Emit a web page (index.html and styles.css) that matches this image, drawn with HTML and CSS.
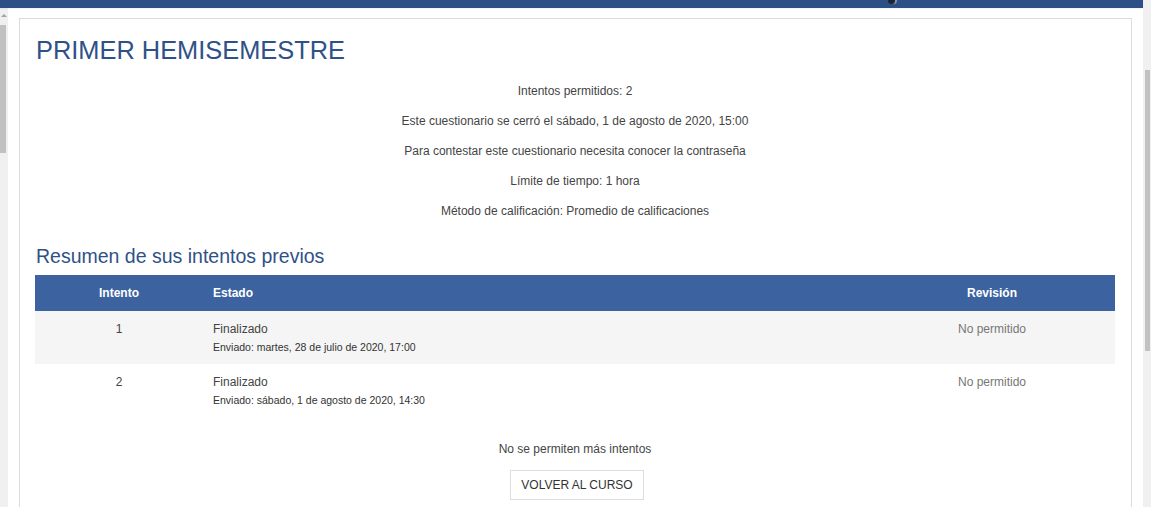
FILE: index.html
```html
<!DOCTYPE html>
<html lang="es">
<head>
<meta charset="utf-8">
<title>PRIMER HEMISEMESTRE</title>
<link rel="stylesheet" href="styles.css">
</head>
<body>
<div class="main">
  <div class="topbar"><span class="avatar"></span></div>
  <div class="row">
    <div class="left-rail">
      <span class="rail-arrow"></span>
      <span class="left-thumb"></span>
    </div>
    <div class="content">
      <div class="card">
        <h1 class="title">PRIMER HEMISEMESTRE</h1>
        <div class="info">
          <p>Intentos permitidos: 2</p>
          <p>Este cuestionario se cerró el sábado, 1 de agosto de 2020, 15:00</p>
          <p>Para contestar este cuestionario necesita conocer la contraseña</p>
          <p>Límite de tiempo: 1 hora</p>
          <p>Método de calificación: Promedio de calificaciones</p>
        </div>
        <h2 class="subtitle">Resumen de sus intentos previos</h2>
        <table class="attempts">
          <thead>
            <tr>
              <th class="c-num">Intento</th>
              <th class="c-state">Estado</th>
              <th class="c-rev">Revisión</th>
            </tr>
          </thead>
          <tbody>
            <tr class="odd">
              <td class="c-num">1</td>
              <td class="c-state">
                <div class="state">Finalizado</div>
                <div class="sent">Enviado: martes, 28 de julio de 2020, 17:00</div>
              </td>
              <td class="c-rev">No permitido</td>
            </tr>
            <tr>
              <td class="c-num">2</td>
              <td class="c-state">
                <div class="state">Finalizado</div>
                <div class="sent">Enviado: sábado, 1 de agosto de 2020, 14:30</div>
              </td>
              <td class="c-rev">No permitido</td>
            </tr>
          </tbody>
        </table>
        <p class="no-more">No se permiten más intentos</p>
        <div class="actions"><button class="btn">VOLVER AL CURSO</button></div>
      </div>
    </div>
  </div>
</div>
<div class="right-rail"><span class="right-thumb"></span></div>
</body>
</html>
```

FILE: styles.css
```css
html, body {
  margin: 0;
  padding: 0;
  height: 507px;
  overflow: hidden;
  background: #fff;
  font-family: "Liberation Sans", Arial, sans-serif;
  color: #444;
}
body {
  display: flex;
}
.main {
  flex: 1;
  display: flex;
  flex-direction: column;
  min-width: 0;
}
.topbar {
  flex: 0 0 8px;
  height: 8px;
  background: #2c4f86;
  position: relative;
  box-shadow: 0 1px 2px rgba(0,0,0,0.06);
  z-index: 1;
}
.avatar {
  position: absolute;
  left: 888px;
  top: -3px;
  width: 7px;
  height: 7px;
  border-radius: 50%;
  background: #1c2430;
  box-shadow: 2px 0 0 #8a93a3;
}
.row {
  flex: 1;
  min-height: 0;
  display: flex;
}
.left-rail {
  width: 8px;
  background: #f0f0f0;
  display: flex;
  flex-direction: column;
}
.rail-arrow {
  width: 0;
  height: 0;
  margin: 6px 0 0 1px;
  border-left: 3px solid transparent;
  border-right: 3px solid transparent;
  border-bottom: 3px solid #a3a3a3;
}
.left-thumb {
  margin-top: 8px;
  width: 6px;
  height: 128px;
  background: #c1c1c1;
}
.content {
  flex: 1;
  min-height: 0;
  display: flex;
  flex-direction: column;
  padding: 10px 11px 0 11px;
  overflow: hidden;
}
.card {
  flex: 1;
  border: 1px solid #dcdcdc;
  border-bottom: none;
  padding: 0 16px 0 15px;
}
.title {
  margin: 16px 0 0 1px;
  font-size: 25.4px;
  line-height: 30px;
  font-weight: normal;
  color: #2f5187;
}
.info {
  margin-top: 17px;
  text-align: center;
  font-size: 12px;
  color: #444;
}
.info p {
  margin: 0 0 12px;
  line-height: 18px;
}
.info p:last-child {
  margin-bottom: 0;
}
.subtitle {
  margin: 24px 0 0 1px;
  font-size: 19.5px;
  line-height: 24px;
  font-weight: normal;
  color: #2f5187;
}
.attempts {
  margin-top: 7px;
  width: 100%;
  border-collapse: collapse;
  font-size: 12px;
}
.attempts th {
  height: 36px;
  padding: 0 10px;
  background: #3c63a0;
  color: #fff;
  font-weight: bold;
  text-align: left;
}
.attempts td {
  padding: 9px 10px 10px;
  vertical-align: top;
  line-height: 18px;
  color: #444;
}
.attempts tr.odd td {
  background: #f5f5f5;
}
.c-num {
  width: 148px;
  text-align: center !important;
}
.c-rev {
  width: 226px;
  text-align: center !important;
}
.attempts td.c-rev {
  color: #777;
}
.state {
  line-height: 18px;
}
.sent {
  margin-top: 2px;
  font-size: 10.5px;
  line-height: 14px;
  color: #333;
}
.no-more {
  margin: 23px 0 0;
  text-align: center;
  font-size: 12px;
  line-height: 18px;
  color: #444;
}
.actions {
  margin-top: 12px;
  display: flex;
  justify-content: center;
  padding-left: 4px;
}
.btn {
  font-family: inherit;
  font-size: 12px;
  color: #333;
  background: #fff;
  border: 1px solid #ddd;
  width: 134px;
  height: 30px;
  padding: 0;
  border-radius: 0;
}
.right-rail {
  width: 8px;
  background: #f0f0f0;
  display: flex;
  flex-direction: column;
}
.right-thumb {
  margin: 70px 0 0 2px;
  width: 5px;
  height: 281px;
  background: #c1c1c1;
}
```
